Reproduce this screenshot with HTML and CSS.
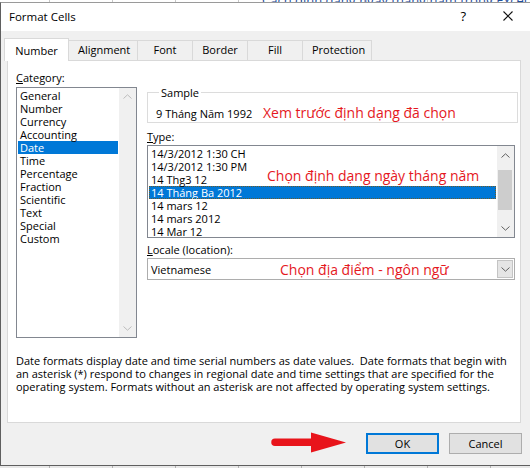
FILE: index.html
```html
<!DOCTYPE html>
<html lang="vi">
<head>
<meta charset="utf-8">
<title>Format Cells</title>
<link rel="stylesheet" href="styles.css">
</head>
<body>
<div class="excel-top"><span class="excel-link">Cách định dạng ngày tháng năm trong Excel</span></div>
<div class="dialog">
  <div class="titlebar">
    <span class="title">Format Cells</span>
    <span class="help">?</span>
    <svg class="close" width="10" height="10" viewBox="0 0 10 10"><path d="M0.5 0.5L9.5 9.5M9.5 0.5L0.5 9.5" stroke="#111" stroke-width="1.1" fill="none"/></svg>
  </div>
  <div class="client">
    <div class="tabs">
      <div class="tab tab-active">Number</div>
      <div class="tab">Alignment</div>
      <div class="tab">Font</div>
      <div class="tab">Border</div>
      <div class="tab">Fill</div>
      <div class="tab">Protection</div>
    </div>
    <div class="panel">
      <div class="main">
        <div class="cat-col">
          <div class="label"><u>C</u>ategory:</div>
          <div class="listbox cat-list">
            <div class="rows">
              <div class="row">General</div>
              <div class="row">Number</div>
              <div class="row">Currency</div>
              <div class="row">Accounting</div>
              <div class="row row-sel">Date</div>
              <div class="row">Time</div>
              <div class="row">Percentage</div>
              <div class="row">Fraction</div>
              <div class="row">Scientific</div>
              <div class="row">Text</div>
              <div class="row">Special</div>
              <div class="row">Custom</div>
            </div>
            <div class="vscroll">
              <svg class="chev" width="9" height="5" viewBox="0 0 9 5"><path d="M0.5 4.5L4.5 0.8L8.5 4.5" stroke="#bcbcbc" fill="none"/></svg>
              <div class="track"></div>
              <svg class="chev" width="9" height="5" viewBox="0 0 9 5"><path d="M0.5 0.5L4.5 4.2L8.5 0.5" stroke="#bcbcbc" fill="none"/></svg>
            </div>
          </div>
        </div>
        <div class="right-col">
          <fieldset class="sample">
            <legend>Sample</legend>
            <div class="sample-line">
              <span class="sample-value">9 Tháng Năm 1992</span>
              <span class="note note-sample">Xem trước định dạng đã chọn</span>
            </div>
          </fieldset>
          <div class="label type-label"><u>T</u>ype:</div>
          <div class="listbox type-list">
            <div class="rows">
              <div class="row">14/3/2012 1:30 CH</div>
              <div class="row">14/3/2012 1:30 PM</div>
              <div class="row row-with-note">14 Thg3 12<span class="note note-type">Chọn định dạng ngày tháng năm</span></div>
              <div class="row row-sel row-focus">14 Tháng Ba 2012</div>
              <div class="row">14 mars 12</div>
              <div class="row">14 mars 2012</div>
              <div class="row">14 Mar 12</div>
            </div>
            <div class="vscroll vscroll-active">
              <svg class="chev" width="9" height="5" viewBox="0 0 9 5"><path d="M0.5 4.5L4.5 0.8L8.5 4.5" stroke="#606060" fill="none"/></svg>
              <div class="track"><div class="thumb"></div></div>
              <svg class="chev" width="9" height="5" viewBox="0 0 9 5"><path d="M0.5 0.5L4.5 4.2L8.5 0.5" stroke="#606060" fill="none"/></svg>
            </div>
          </div>
          <div class="label locale-label"><u>L</u>ocale (location):</div>
          <div class="combo">
            <span class="combo-value">Vietnamese</span>
            <span class="note note-locale">Chọn địa điểm - ngôn ngữ</span>
            <span class="combo-btn">
              <svg width="9" height="5" viewBox="0 0 9 5"><path d="M0.5 0.5L4.5 4.2L8.5 0.5" stroke="#606060" fill="none"/></svg>
            </span>
          </div>
        </div>
      </div>
      <p class="desc">Date formats display date and time serial numbers as date values.&nbsp; Date formats that begin with an asterisk (*) respond to changes in regional date and time settings that are specified for the operating system. Formats without an asterisk are not affected by operating system settings.</p>
    </div>
    <div class="footer">
      <svg class="arrow" width="76" height="22" viewBox="0 0 76 22"><path d="M4 6.5H40V0.5L75 10.5L40 20.5V14H4A3.75 3.75 0 0 1 4 6.5Z" fill="#e8141b"/></svg>
      <button class="btn btn-default">OK</button>
      <button class="btn">Cancel</button>
    </div>
  </div>
</div>
<div class="excel-bottom"></div>
</body>
</html>
```

FILE: styles.css
```css
html, body {
  margin: 0;
  padding: 0;
}
body {
  width: 530px;
  height: 468px;
  overflow: hidden;
  background: #ffffff;
  font-family: "Open Sans", "Noto Sans", sans-serif;
  font-size: 11px;
  color: #000;
}
.excel-top {
  height: 2px;
  overflow: hidden;
  position: relative;
  background-color: #fff;
  background-image: repeating-linear-gradient(90deg, transparent 0, transparent 49px, #c8c8c8 49px, #c8c8c8 50px, transparent 50px, transparent 63px);
}
.excel-link {
  position: absolute;
  left: 262px;
  top: -9px;
  color: #1f4e9c;
  font-size: 13px;
  text-decoration: underline;
  white-space: nowrap;
}
.dialog {
  width: 529px;
  height: 462px;
  border-top: 1px solid #9a9a9a;
  border-left: 1px solid #5f5f5f;
  border-bottom: 1px solid #5f5f5f;
  display: flex;
  flex-direction: column;
  background: #f0f0f0;
}
.excel-bottom {
  height: 3px;
  background-color: #e8e8e8;
  background-image: repeating-linear-gradient(90deg, transparent 0, transparent 49px, #b0b0b0 49px, #b0b0b0 50px, transparent 50px, transparent 63px);
}
.titlebar {
  height: 28px;
  background: #fff;
  display: flex;
  align-items: center;
  padding-left: 8px;
  font-size: 11.5px;
}
.title {
  flex: 1;
  margin-top: -2px;
}
.help {
  font-size: 13px;
  margin-right: 37px;
  margin-top: -2px;
}
.close {
  margin-right: 17px;
  margin-top: -2px;
}
.client {
  flex: 1;
  display: flex;
  flex-direction: column;
  padding-top: 8px;
}
.tabs {
  display: flex;
  align-items: flex-end;
  padding-left: 3px;
  height: 21px;
  position: relative;
  z-index: 1;
}
.tab {
  height: 19px;
  line-height: 18px;
  padding: 0 9px;
  border: 1px solid #d9d9d9;
  border-bottom: none;
  margin-left: -1px;
  background: #f0f0f0;
  text-align: center;
}
.tab:nth-child(2) { width: 50px; }
.tab:nth-child(3) { width: 36px; }
.tab:nth-child(4) { width: 36px; }
.tab:nth-child(5) { width: 36px; }
.tab:nth-child(6) { width: 50px; }
.tab-active {
  margin-left: 0;
  width: 45px;
  height: 22px;
  line-height: 24px;
  background: #fff;
  border-color: #d9d9d9;
  margin-bottom: -1px;
}
.panel {
  margin-left: 6px;
  width: 514px;
  height: 363px;
  border: 1px solid #d9d9d9;
  background: #fff;
  padding: 9px 0 0 8px;
  box-sizing: border-box;
  display: flex;
  flex-direction: column;
}
.main {
  display: flex;
  gap: 10px;
}
.label {
  line-height: 13px;
  height: 13px;
  white-space: nowrap;
}
.cat-col {
  width: 121px;
}
.cat-col .label {
  height: 16px;
  margin-top: 1px;
}
.listbox {
  border: 1px solid #828790;
  display: flex;
  background: #fff;
}
.cat-list {
  height: 249px;
}
.rows {
  flex: 1;
  padding: 1px 1px 0 1px;
  min-width: 0;
}
.row {
  height: 13px;
  line-height: 13px;
  padding-left: 2px;
  white-space: nowrap;
}
.row-sel {
  background: #0078d7;
  color: #fff;
}
.row-focus {
  outline: 1px dotted #6b5a2a;
  outline-offset: -1px;
}
.vscroll {
  width: 17px;
  background: #f0f0f0;
  display: flex;
  flex-direction: column;
  align-items: center;
}
.vscroll .chev {
  flex: none;
  margin: 6px 0;
}
.vscroll .track {
  flex: 1;
  align-self: stretch;
}
.vscroll-active .chev:first-child {
  margin: 7px 0 6px;
}
.vscroll-active .track {
  padding: 6px 2px 0 1px;
}
.thumb {
  height: 40px;
  background: #cdcdcd;
}
.right-col {
  width: 368px;
}
.sample {
  margin: 16px 0 0 0;
  padding: 4px 0 3px 8px;
  border: 1px solid #dcdcdc;
  width: 371px;
  box-sizing: border-box;
}
.sample legend {
  padding: 0 2px;
  margin-left: 3px;
  line-height: 13px;
}
.sample-line {
  display: flex;
  align-items: baseline;
  height: 16px;
}
.sample-value {
  width: 107px;
}
.note {
  color: #e5181e;
  font-size: 14px;
  white-space: nowrap;
}
.type-label {
  margin-top: 7px;
}
.type-list {
  margin-top: 2px;
  height: 91px;
}
.row-with-note {
  position: relative;
}
.note-type {
  position: absolute;
  left: 118px;
  top: -5px;
  line-height: 16px;
}
.locale-label {
  margin-top: 5px;
}
.combo {
  margin-top: 2px;
  height: 20px;
  border: 1px solid #adadad;
  display: flex;
  align-items: center;
}
.combo-value {
  padding-left: 3px;
  width: 129px;
}
.note-locale {
  flex: 1;
}
.combo-btn {
  align-self: stretch;
  width: 16px;
  margin: 1px 1px 1px 0;
  background: #e5e5e5;
  border: 1px solid #c4c4c4;
  box-sizing: border-box;
  display: flex;
  align-items: center;
  justify-content: center;
}
.desc {
  margin: 16px 10px 0 0;
  line-height: 13px;
  font-size: 11px;
}
.footer {
  width: 515px;
  margin-left: 6px;
  margin-top: 10px;
  display: flex;
  justify-content: flex-end;
  align-items: center;
}
.arrow {
  margin-right: 19px;
  margin-top: -1px;
}
.btn {
  font-family: inherit;
  font-size: 11px;
  width: 73px;
  height: 21px;
  padding: 0;
  background: #e1e1e1;
  border: 1px solid #adadad;
  color: #000;
}
.btn-default {
  border: 2px solid #0078d7;
  margin-right: 10px;
}
```
